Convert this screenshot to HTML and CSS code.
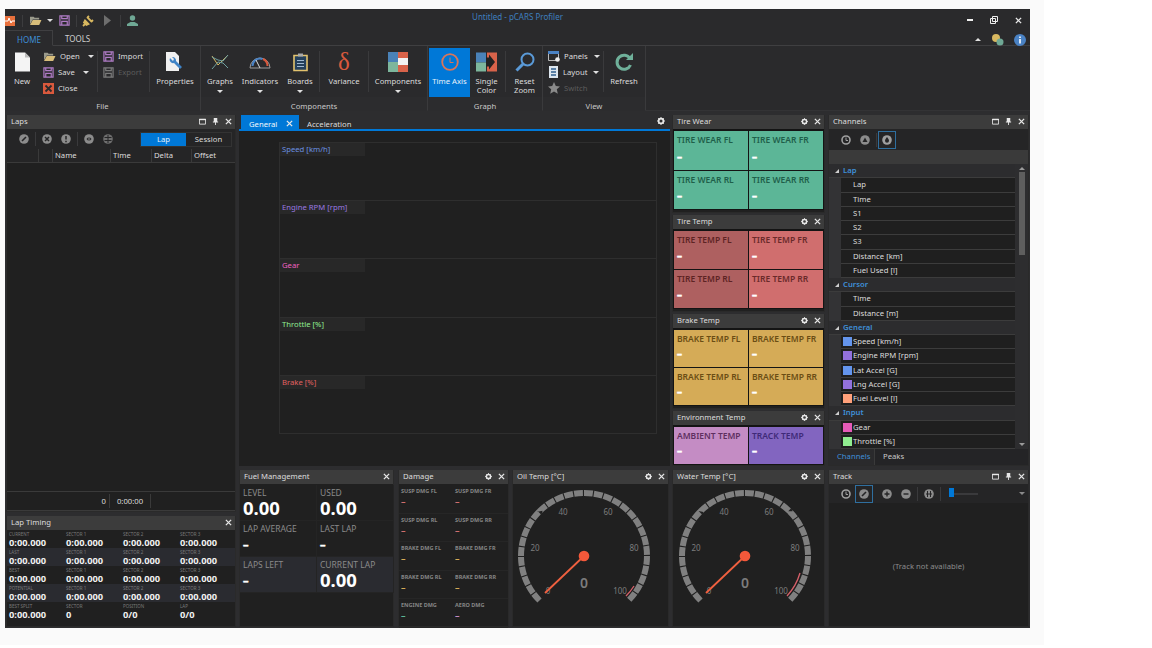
FILE: index.html
```html
<!DOCTYPE html>
<html>

<head>
    <meta charset="utf-8">
    <title>pCARS Profiler</title>
    <link rel="stylesheet" href="styles.css">
</head>

<body>
    <!-- shared small icons -->
    <svg class="sprite">
        <symbol id="i-close" viewBox="0 0 8 8"><path d="M1 1l6 6M7 1L1 7" stroke="#e8e8e8" stroke-width="1.5" fill="none" /></symbol>
        <symbol id="i-max" viewBox="0 0 8 8"><path d="M.5 1.500h7v5.500h-7z" stroke="#e8e8e8" fill="none" /><path d="M0 1h8v1.500H0z" fill="#e8e8e8" /></symbol>
        <symbol id="i-pin" viewBox="0 0 8 8"><path d="M2 0h4v4h1v1H4.500v3h-1V5H1V4h1z" fill="#e8e8e8" /></symbol>
        <symbol id="i-gear" viewBox="0 0 8 8"><circle cx="4" cy="4" r="2.400" stroke="#e8e8e8" stroke-width="1.700" fill="none" /><path d="M4 0v8M0 4h8M1.200 1.200l5.600 5.600M6.800 1.200L1.200 6.800" stroke="#e8e8e8" stroke-width=".9" stroke-dasharray="1.300 5.400" /></symbol>
        <symbol id="i-floppy" viewBox="0 0 12 12"><path d="M1 1h10v10H1zM3 1v3h6V1M3 11V7h6v4" stroke="currentColor" stroke-width="1.300" fill="none" /></symbol>
        <symbol id="i-folder" viewBox="0 0 14 12"><path d="M1 2h4l1 1h5v2H4L1 10z" fill="#9a9a8c" /><path d="M4 5.500h9.500L11 11H1z" fill="#d8bd7a" /></symbol>
        <symbol id="i-edit" viewBox="0 0 10 10"><circle cx="5" cy="5" r="4.800" fill="#8c8c8c" /><path d="M3 7l4-4" stroke="#252526" stroke-width="1.600" /></symbol>
        <symbol id="i-x" viewBox="0 0 10 10"><circle cx="5" cy="5" r="4.800" fill="#8c8c8c" /><path d="M3 3l4 4M7 3L3 7" stroke="#252526" stroke-width="1.500" /></symbol>
        <symbol id="i-warn" viewBox="0 0 10 10"><circle cx="5" cy="5" r="4.800" fill="#8c8c8c" /><path d="M5 2v3.500M5 6.800v1.400" stroke="#252526" stroke-width="1.500" /></symbol>
        <symbol id="i-left" viewBox="0 0 10 10"><circle cx="5" cy="5" r="4.800" fill="#8c8c8c" /><path d="M4.500 3L2.500 5l2 2zM5.500 3l2 2-2 2z" fill="#252526" /></symbol>
        <symbol id="i-both" viewBox="0 0 10 10"><circle cx="5" cy="5" r="4.800" fill="#6e6e6e" /><path d="M5 1v8M1.500 3.500h7M1.500 6.500h7" stroke="#252526" /></symbol>
        <symbol id="i-clock" viewBox="0 0 10 10"><circle cx="5" cy="5" r="4" stroke="#a0a0a0" stroke-width="1.600" fill="none" /><path d="M5 2.500V5.500H7" stroke="#a0a0a0" fill="none" /></symbol>
        <symbol id="i-tri" viewBox="0 0 10 10"><circle cx="5" cy="5" r="4.800" fill="#8c8c8c" /><path d="M5 2.500l2.500 4.500h-5z" fill="#252526" /></symbol>
        <symbol id="i-drop" viewBox="0 0 10 10"><circle cx="5" cy="5" r="4.800" fill="#a0a0a0" /><path d="M5 2c1 1.500 2 2.500 2 3.700a2 2 0 0 1-4 0C3 4.500 4 3.500 5 2z" fill="#252526" /></symbol>
        <symbol id="i-plus" viewBox="0 0 10 10"><circle cx="5" cy="5" r="4.800" fill="#8c8c8c" /><path d="M2.500 5h5M5 2.500v5" stroke="#252526" stroke-width="1.400" /></symbol>
        <symbol id="i-minus" viewBox="0 0 10 10"><circle cx="5" cy="5" r="4.800" fill="#8c8c8c" /><path d="M2.500 5h5" stroke="#252526" stroke-width="1.400" /></symbol>
        <symbol id="i-grid" viewBox="0 0 10 10"><circle cx="5" cy="5" r="4.800" fill="#8c8c8c" /><path d="M3.500 2v6M6.500 2v6M2 5h6" stroke="#252526" /></symbol>
    </svg>

    <div class="page">
        <div class="window">
            <header class="titlebar">
                <div class="quick">
                    <svg class="q-logo" width="10" height="12" viewBox="0 0 10 12"><path d="M0 1h10v10H0z" fill="#e8703c" /><path d="M0 6h3l1-3 2 5 1-2h3" stroke="#fff" fill="none" /></svg>
                    <span class="q-sep"></span>
                    <svg width="13" height="11"><use href="#i-folder" /></svg>
                    <span class="caret q-caret"></span>
                    <svg class="q-save" width="11" height="11"><use href="#i-floppy" /></svg>
                    <span class="q-sep"></span>
                    <svg class="q-plug" width="12" height="12" viewBox="0 0 12 12"><path d="M1 11l2.500-2.500M5 2l5 5M7 1L5.500 2.500M11 5L9.500 6.500M3 5.500l3.500 3.500-2 1-2.500-2.500z" stroke="#d8b860" stroke-width="1.800" fill="#d8b860" /></svg>
                    <svg class="q-play" width="7" height="11" viewBox="0 0 7 11"><path d="M0 0l7 5.500L0 11z" fill="#6e6e6e" /></svg>
                    <span class="q-sep"></span>
                    <svg class="q-user" width="11" height="11" viewBox="0 0 11 11"><circle cx="5.500" cy="3" r="2.700" fill="#6fa895" /><path d="M0 11V9l3.500-2h4L11 9v2z" fill="#6fa895" /></svg>
                </div>
                <div class="title">Untitled - pCARS Profiler</div>
                <div class="winbtns">
                    <span class="win-min"></span>
                    <svg width="8" height="8" viewBox="0 0 8 8"><path d="M2.500.5h5v5h-5zM.5 2.500h5v5h-5z" stroke="#eee" fill="#2a2a2c" /></svg>
                    <svg width="7" height="7"><use href="#i-close" /></svg>
                </div>
            </header>

            <nav class="tabstrip">
                <span class="rtab rtab-on">HOME</span>
                <span class="rtab">TOOLS</span>
                <div class="tabstrip-right">
                    <span class="caret caret-up"></span>
                    <svg width="13" height="13" viewBox="0 0 13 13"><circle cx="5" cy="5" r="4" fill="#d8b860" /><circle cx="9" cy="9" r="3.500" fill="#6fa895" /></svg>
                    <svg width="12" height="12" viewBox="0 0 12 12"><circle cx="6" cy="6" r="6" fill="#4a82c4" /><path d="M5.200 5h1.600v4.500H5.200zM5.200 2.500h1.600V4H5.200z" fill="#fff" /></svg>
                </div>
            </nav>

            <section class="ribbon">
                <div class="rgroup g-file">
                    <div class="rgroup-body">
                        <div class="bigbtn w-new">
                            <svg width="15" height="19" viewBox="0 0 15 19"><path d="M0 0h10l5 5v14H0z" fill="#f4f4f4" /><path d="M10 0v5h5" fill="#bbb" /></svg>
                            <span>New</span>
                        </div>
                        <div class="smallcol w-open">
                            <div class="smallbtn"><svg width="13" height="11"><use href="#i-folder" /></svg><span>Open</span><span class="caret"></span></div>
                            <div class="smallbtn"><svg class="purple" width="11" height="11"><use href="#i-floppy" /></svg><span>Save</span><span class="caret"></span></div>
                            <div class="smallbtn"><svg width="11" height="11" viewBox="0 0 11 11"><path d="M0 0h11v11H0z" fill="#d9593d" /><path d="M2.500 2.500l6 6M8.500 2.500l-6 6" stroke="#2a2a2c" stroke-width="1.800" /></svg><span>Close</span></div>
                        </div>
                        <span class="rsep"></span>
                        <div class="smallcol w-import">
                            <div class="smallbtn"><svg class="purple" width="11" height="11"><use href="#i-floppy" /></svg><span>Import</span></div>
                            <div class="smallbtn off"><svg class="grey" width="11" height="11"><use href="#i-floppy" /></svg><span>Export</span></div>
                        </div>
                        <span class="rsep"></span>
                        <div class="bigbtn w-props">
                            <svg width="18" height="20" viewBox="0 0 18 20"><path d="M0 0h9l4 4v15H0z" fill="#f0f0f0" /><path d="M4 6a3.500 3.500 0 0 0 4 5l6 6 2-2-6-6a3.500 3.500 0 0 0-4-4l2 2-1 2z" fill="#3f83c6" /></svg>
                            <span>Properties</span>
                        </div>
                    </div>
                    <div class="rgroup-label">File</div>
                </div>

                <div class="rgroup g-comp">
                    <div class="rgroup-body">
                        <div class="bigbtn w-graphs">
                            <svg width="18" height="16" viewBox="0 0 18 16"><path d="M1 2l6 9 5-5 5-5" stroke="#d8b860" fill="none" /><path d="M1 15l6-7 5 1 5 5M1 3l6 3 5 1 5-6" stroke="#6fa0a0" fill="none" /></svg>
                            <span>Graphs</span><span class="caret"></span>
                        </div>
                        <div class="bigbtn w-ind">
                            <svg width="24" height="16" viewBox="0 0 24 16"><path d="M2 14a10 10 0 0 1 20 0z" stroke="#9a9a9a" fill="none" /><path d="M4.500 12a7.500 7.500 0 0 1 10-7" stroke="#4a82c4" stroke-width="2" fill="none" /><path d="M15 5a7.500 7.500 0 0 1 4.500 7" stroke="#d9593d" stroke-width="2" fill="none" /><path d="M8 6l4 8" stroke="#ddd" /></svg>
                            <span>Indicators</span><span class="caret"></span>
                        </div>
                        <div class="bigbtn w-boards">
                            <svg width="15" height="19" viewBox="0 0 15 19"><path d="M1 3h13v15H1z" fill="#24405c" stroke="#e2c26e" stroke-width="1.600" /><path d="M5 1h5v3H5z" fill="#aaa" /><path d="M4 8h7M4 11h7M4 14h7" stroke="#9fb8d0" /></svg>
                            <span>Boards</span><span class="caret"></span>
                        </div>
                        <span class="rsep"></span>
                        <div class="bigbtn w-var">
                            <span class="delta">δ</span>
                            <span>Variance</span>
                        </div>
                        <span class="rsep"></span>
                        <div class="bigbtn w-comps">
                            <svg width="20" height="20" viewBox="0 0 20 20"><path d="M0 0h10v10H0z" fill="#4a82b8" /><path d="M0 10h10v10H0z" fill="#7db69c" /><path d="M10 0h10v6H10zM10 13h10v7H10z" fill="#d9634a" /><path d="M10 6h10v7H10z" fill="#f2f2f2" /></svg>
                            <span>Components</span><span class="caret"></span>
                        </div>
                    </div>
                    <div class="rgroup-label">Components</div>
                </div>

                <div class="rgroup g-graph">
                    <div class="rgroup-body">
                        <div class="bigbtn w-time active">
                            <svg width="18" height="18" viewBox="0 0 18 18"><circle cx="9" cy="9" r="7.800" stroke="#d9755a" stroke-width="1.800" fill="none" /><path d="M9 4.500V9.500H12.500" stroke="#d9755a" fill="none" /></svg>
                            <span>Time Axis</span>
                        </div>
                        <div class="bigbtn w-single">
                            <svg width="21" height="19" viewBox="0 0 21 19"><path d="M0 0h10v10H0z" fill="#4a82b8" /><path d="M0 10h10v9H0z" fill="#7db69c" /><path d="M11 0h10v19H11z" fill="#d9634a" /><path d="M10 5h3V2l6 7.500-6 7.500v-3h-3z" fill="#222" /></svg>
                            <span>Single<br>Color</span>
                        </div>
                        <span class="rsep"></span>
                        <div class="bigbtn w-reset">
                            <svg width="20" height="20" viewBox="0 0 20 20"><circle cx="12.500" cy="7.500" r="6" stroke="#5a9ad8" stroke-width="2" fill="none" /><path d="M8 12l-6.500 6.500" stroke="#5a9ad8" stroke-width="3" /></svg>
                            <span>Reset<br>Zoom</span>
                        </div>
                    </div>
                    <div class="rgroup-label">Graph</div>
                </div>

                <div class="rgroup g-view">
                    <div class="rgroup-body">
                        <div class="smallcol w-panels">
                            <div class="smallbtn"><svg width="12" height="11" viewBox="0 0 12 11"><path d="M.5 1.500h10v8H.5z" stroke="#bbb" fill="none" /><path d="M0 0h11v3H0z" fill="#4a82c4" /><circle cx="9.500" cy="8.500" r="2.300" fill="#eee" /></svg><span>Panels</span><span class="caret"></span></div>
                            <div class="smallbtn"><svg width="11" height="12" viewBox="0 0 11 12"><path d="M1 0h9v12H1z" fill="#dde6ee" /><path d="M3 3h5M3 6h5M3 9h5" stroke="#2f5f8f" stroke-width="1.400" /></svg><span>Layout</span><span class="caret"></span></div>
                            <div class="smallbtn off"><svg width="12" height="12" viewBox="0 0 12 12"><path d="M6 0l1.800 4 4.200.4-3.200 2.800 1 4.500L6 9.400l-3.800 2.300 1-4.500L0 4.400 4.200 4z" fill="#8a8a8a" /></svg><span>Switch</span></div>
                        </div>
                        <span class="rsep"></span>
                        <div class="bigbtn w-refresh">
                            <svg width="18" height="18" viewBox="0 0 18 18"><path d="M15 5.500A7 7 0 1 0 15.500 12" stroke="#6fb09a" stroke-width="3" fill="none" /><path d="M11 7h7V0z" fill="#6fb09a" /></svg>
                            <span>Refresh</span>
                        </div>
                    </div>
                    <div class="rgroup-label">View</div>
                </div>
            </section>

            <main class="workspace">
                <div class="leftcol">
                    <section class="pane laps">
                        <div class="pane-head"><span>Laps</span>
                            <div class="pane-btns"><svg><use href="#i-max" /></svg><svg><use href="#i-pin" /></svg><svg><use href="#i-close" /></svg></div>
                        </div>
                        <div class="toolbar laps-tools">
                            <svg class="tool"><use href="#i-edit" /></svg>
                            <span class="tool-sep"></span>
                            <svg class="tool"><use href="#i-x" /></svg>
                            <svg class="tool"><use href="#i-warn" /></svg>
                            <span class="tool-sep"></span>
                            <svg class="tool"><use href="#i-left" /></svg>
                            <svg class="tool"><use href="#i-both" /></svg>
                            <div class="segment"><span class="seg seg-on">Lap</span><span class="seg">Session</span></div>
                        </div>
                        <div class="laps-cols">
                            <span class="c1"></span><span class="c2"></span><span class="c3">Name</span><span class="c4">Time</span><span class="c5">Delta</span><span class="c6">Offset</span>
                        </div>
                        <div class="laps-body"></div>
                        <div class="laps-foot"><span class="foot-a">0</span><span class="foot-b">0:00:00</span></div>
                    </section>

                    <section class="pane timing">
                        <div class="pane-head"><span>Lap Timing</span>
                            <div class="pane-btns"><svg><use href="#i-close" /></svg></div>
                        </div>
                        <div class="timing-grid">
                            <div class="tm"><small>CURRENT</small><b>0:00.000</b></div><div class="tm"><small>SECTOR 1</small><b>0:00.000</b></div><div class="tm"><small>SECTOR 2</small><b>0:00.000</b></div><div class="tm"><small>SECTOR 3</small><b>0:00.000</b></div>
                            <div class="tm alt"><small>LAST</small><b>0:00.000</b></div><div class="tm alt"><small>SECTOR 1</small><b>0:00.000</b></div><div class="tm alt"><small>SECTOR 2</small><b>0:00.000</b></div><div class="tm alt"><small>SECTOR 3</small><b>0:00.000</b></div>
                            <div class="tm"><small>BEST</small><b>0:00.000</b></div><div class="tm"><small>SECTOR 1</small><b>0:00.000</b></div><div class="tm"><small>SECTOR 2</small><b>0:00.000</b></div><div class="tm"><small>SECTOR 3</small><b>0:00.000</b></div>
                            <div class="tm alt"><small>POTENTIAL</small><b>0:00.000</b></div><div class="tm alt"><small>SECTOR 1</small><b>0:00.000</b></div><div class="tm alt"><small>SECTOR 2</small><b>0:00.000</b></div><div class="tm alt"><small>SECTOR 3</small><b>0:00.000</b></div>
                            <div class="tm"><small>BEST SPLIT</small><b>0:00.000</b></div><div class="tm"><small>SECTOR</small><b>0</b></div><div class="tm"><small>POSITION</small><b>0/0</b></div><div class="tm"><small>LAP</small><b>0/0</b></div>
                        </div>
                    </section>
                </div>

                <div class="rightcol">
                    <div class="toprow">
                        <section class="doc">
                            <div class="doc-tabs">
                                <span class="dtab dtab-on">General<svg width="7" height="7"><use href="#i-close" /></svg></span>
                                <span class="dtab">Acceleration</span>
                                <svg class="doc-gear" width="8" height="8"><use href="#i-gear" /></svg>
                            </div>
                            <div class="doc-body">
                                <div class="plot">
                                    <div class="plot-row"><span class="plot-label c-speed">Speed [km/h]</span></div>
                                    <div class="plot-row"><span class="plot-label c-rpm">Engine RPM [rpm]</span></div>
                                    <div class="plot-row"><span class="plot-label c-gear">Gear</span></div>
                                    <div class="plot-row"><span class="plot-label c-throttle">Throttle [%]</span></div>
                                    <div class="plot-row"><span class="plot-label c-brake">Brake [%]</span></div>
                                </div>
                            </div>
                        </section>

                        <div class="tilecol">
                            <section class="pane tp-wear">
                                <div class="pane-head"><span>Tire Wear</span><div class="pane-btns"><svg><use href="#i-gear" /></svg><svg><use href="#i-close" /></svg></div></div>
                                <div class="tiles">
                                    <div class="tile green"><span>TIRE WEAR FL</span><b>–</b></div>
                                    <div class="tile green"><span>TIRE WEAR FR</span><b>–</b></div>
                                    <div class="tile green"><span>TIRE WEAR RL</span><b>–</b></div>
                                    <div class="tile green"><span>TIRE WEAR RR</span><b>–</b></div>
                                </div>
                            </section>
                            <section class="pane tp-temp">
                                <div class="pane-head"><span>Tire Temp</span><div class="pane-btns"><svg><use href="#i-gear" /></svg><svg><use href="#i-close" /></svg></div></div>
                                <div class="tiles">
                                    <div class="tile darkred"><span>TIRE TEMP FL</span><b>–</b></div>
                                    <div class="tile red"><span>TIRE TEMP FR</span><b>–</b></div>
                                    <div class="tile darkred"><span>TIRE TEMP RL</span><b>–</b></div>
                                    <div class="tile red"><span>TIRE TEMP RR</span><b>–</b></div>
                                </div>
                            </section>
                            <section class="pane tp-brake">
                                <div class="pane-head"><span>Brake Temp</span><div class="pane-btns"><svg><use href="#i-gear" /></svg><svg><use href="#i-close" /></svg></div></div>
                                <div class="tiles">
                                    <div class="tile gold"><span>BRAKE TEMP FL</span><b>–</b></div>
                                    <div class="tile gold"><span>BRAKE TEMP FR</span><b>–</b></div>
                                    <div class="tile gold"><span>BRAKE TEMP RL</span><b>–</b></div>
                                    <div class="tile gold"><span>BRAKE TEMP RR</span><b>–</b></div>
                                </div>
                            </section>
                            <section class="pane tp-env">
                                <div class="pane-head"><span>Environment Temp</span><div class="pane-btns"><svg><use href="#i-gear" /></svg><svg><use href="#i-close" /></svg></div></div>
                                <div class="tiles">
                                    <div class="tile pink"><span>AMBIENT TEMP</span><b>–</b></div>
                                    <div class="tile purple-t"><span>TRACK TEMP</span><b>–</b></div>
                                </div>
                            </section>
                        </div>

                        <section class="pane channels">
                            <div class="pane-head"><span>Channels</span>
                                <div class="pane-btns"><svg><use href="#i-max" /></svg><svg><use href="#i-pin" /></svg><svg><use href="#i-close" /></svg></div>
                            </div>
                            <div class="toolbar ch-tools">
                                <svg class="tool"><use href="#i-clock" /></svg>
                                <svg class="tool"><use href="#i-tri" /></svg>
                                <span class="tool-sep"></span>
                                <span class="tool-box"><svg class="tool"><use href="#i-drop" /></svg></span>
                            </div>
                            <div class="ch-band"></div>
                            <div class="ch-main">
                                <div class="tree">
                                    <div class="tgroup">Lap</div>
                                    <div class="titem">Lap</div>
                                    <div class="titem">Time</div>
                                    <div class="titem">S1</div>
                                    <div class="titem">S2</div>
                                    <div class="titem">S3</div>
                                    <div class="titem">Distance [km]</div>
                                    <div class="titem">Fuel Used [l]</div>
                                    <div class="tgroup">Cursor</div>
                                    <div class="titem">Time</div>
                                    <div class="titem">Distance [m]</div>
                                    <div class="tgroup">General</div>
                                    <div class="titem"><i class="sw sw-blue"></i>Speed [km/h]</div>
                                    <div class="titem"><i class="sw sw-violet"></i>Engine RPM [rpm]</div>
                                    <div class="titem"><i class="sw sw-blue"></i>Lat Accel [G]</div>
                                    <div class="titem"><i class="sw sw-violet"></i>Lng Accel [G]</div>
                                    <div class="titem"><i class="sw sw-peach"></i>Fuel Level [l]</div>
                                    <div class="tgroup">Input</div>
                                    <div class="titem"><i class="sw sw-pink"></i>Gear</div>
                                    <div class="titem"><i class="sw sw-lime"></i>Throttle [%]</div>
                                </div>
                                <div class="scroll">
                                    <span class="caret caret-up"></span>
                                    <div class="scroll-thumb"></div>
                                    <span class="caret scroll-down"></span>
                                </div>
                            </div>
                            <div class="ch-tabs"><span class="ctab ctab-on">Channels</span><span class="ctab">Peaks</span></div>
                        </section>
                    </div>

                    <div class="bottomrow">
                        <section class="pane fuel">
                            <div class="pane-head"><span>Fuel Management</span><div class="pane-btns"><svg><use href="#i-close" /></svg></div></div>
                            <div class="fuel-grid">
                                <div class="fc"><span>LEVEL</span><b>0.00</b></div>
                                <div class="fc"><span>USED</span><b>0.00</b></div>
                                <div class="fc"><span>LAP AVERAGE</span><b class="dash">–</b></div>
                                <div class="fc"><span>LAST LAP</span><b class="dash">–</b></div>
                                <div class="fc alt"><span>LAPS LEFT</span><b class="dash">–</b></div>
                                <div class="fc alt"><span>CURRENT LAP</span><b>0.00</b></div>
                            </div>
                        </section>

                        <section class="pane damage">
                            <div class="pane-head"><span>Damage</span><div class="pane-btns"><svg><use href="#i-gear" /></svg><svg><use href="#i-close" /></svg></div></div>
                            <div class="damage-grid">
                                <div class="dc d-red"><span>SUSP DMG FL</span><b>–</b></div>
                                <div class="dc d-red"><span>SUSP DMG FR</span><b>–</b></div>
                                <div class="dc d-red"><span>SUSP DMG RL</span><b>–</b></div>
                                <div class="dc d-red"><span>SUSP DMG RR</span><b>–</b></div>
                                <div class="dc d-gold"><span>BRAKE DMG FL</span><b>–</b></div>
                                <div class="dc d-gold"><span>BRAKE DMG FR</span><b>–</b></div>
                                <div class="dc d-gold"><span>BRAKE DMG RL</span><b>–</b></div>
                                <div class="dc d-gold"><span>BRAKE DMG RR</span><b>–</b></div>
                                <div class="dc d-green"><span>ENGINE DMG</span><b>–</b></div>
                                <div class="dc d-pink"><span>AERO DMG</span><b>–</b></div>
                            </div>
                        </section>

                        <section class="pane gauge-pane">
                            <div class="pane-head"><span>Oil Temp [°C]</span><div class="pane-btns"><svg><use href="#i-gear" /></svg><svg><use href="#i-close" /></svg></div></div>
                            <svg class="gauge" viewBox="0 0 155 142">
                                <path class="g-ring" pathLength="300" d="M26.500 116.500A63 63 0 1 1 115.500 116.500" />
                                <path class="g-hot" d="M113 112A58 58 0 0 0 121 102" />
                                <g class="g-ticks">
                                    <text x="22" y="67">20</text><text x="50" y="31">40</text><text x="95" y="31">60</text><text x="121" y="67">80</text><text x="107" y="110">100</text><text x="35" y="110">0</text>
                                </g>
                                <text class="g-value" x="71" y="104">0</text>
                                <path class="g-needle" d="M71 72L32 109" />
                                <circle class="g-hub" cx="71" cy="72" r="5.300" />
                            </svg>
                        </section>

                        <section class="pane gauge-pane water">
                            <div class="pane-head"><span>Water Temp [°C]</span><div class="pane-btns"><svg><use href="#i-gear" /></svg><svg><use href="#i-close" /></svg></div></div>
                            <svg class="gauge" viewBox="0 0 151 142">
                                <path class="g-ring" pathLength="300" d="M27.500 116.500A63 63 0 1 1 116.500 116.500" />
                                <path class="g-hot" d="M114 112A58 58 0 0 0 127 89" />
                                <g class="g-ticks">
                                    <text x="23" y="67">20</text><text x="51" y="31">40</text><text x="96" y="31">60</text><text x="122" y="67">80</text><text x="108" y="110">100</text><text x="36" y="110">0</text>
                                </g>
                                <text class="g-value" x="72" y="104">0</text>
                                <path class="g-needle" d="M72 72L33 109" />
                                <circle class="g-hub" cx="72" cy="72" r="5.300" />
                            </svg>
                        </section>

                        <section class="pane track">
                            <div class="pane-head"><span>Track</span>
                                <div class="pane-btns"><svg><use href="#i-max" /></svg><svg><use href="#i-pin" /></svg><svg><use href="#i-close" /></svg></div>
                            </div>
                            <div class="toolbar track-tools">
                                <svg class="tool"><use href="#i-clock" /></svg>
                                <span class="tool-box"><svg class="tool"><use href="#i-edit" /></svg></span>
                                <svg class="tool"><use href="#i-plus" /></svg>
                                <svg class="tool"><use href="#i-minus" /></svg>
                                <span class="tool-sep"></span>
                                <svg class="tool"><use href="#i-grid" /></svg>
                                <span class="tool-sep"></span>
                                <div class="slider"><span class="slider-knob"></span></div>
                                <span class="caret track-caret"></span>
                            </div>
                            <div class="track-body">(Track not available)</div>
                        </section>
                    </div>
                </div>
            </main>
        </div>
    </div>
</body>

</html>
```

FILE: styles.css
```css
* {
    box-sizing: border-box;
}

html,
body {
    margin: 0;
    padding: 0;
    background-color: #fff;
}

body {
    font-family: "Noto Sans", Arial, sans-serif;
    font-size: 7.700px;
    color: #dcdcdc;
    overflow: hidden;
}

.sprite {
    display: none;
}

.page {
    width: 1044px;
    height: 645px;
    padding: 9px 0 0 5px;
    background-color: #fafafa;
}

.window {
    width: 1025px;
    height: 619px;
    background-color: #2a2a2c;
    display: flex;
    flex-direction: column;
}

/* title bar */
.titlebar {
    height: 22px;
    flex: none;
    display: flex;
    align-items: center;
    position: relative;
}

.quick {
    display: flex;
    align-items: center;
    margin-top: 1px;
}

.q-sep {
    width: 1px;
    height: 12px;
    background-color: #3c3c3e;
    margin: 0 6px;
}

.q-logo {
    margin-right: 1px;
}

.q-caret {
    margin: 0 6px 0 5px;
}

.q-save {
    color: #b07cc6;
}

.q-plug {
    margin-left: -1px;
}

.q-play {
    margin-left: 10px;
    margin-right: 3px;
}

.title {
    position: absolute;
    left: 0;
    right: 0;
    top: 2px;
    text-align: center;
    color: #3f7fbf;
    font-size: 8px;
}

.winbtns {
    margin-left: auto;
    display: flex;
    align-items: center;
    gap: 17px;
    padding-right: 8px;
}

.win-min {
    width: 6px;
    height: 2px;
    background-color: #f0f0f0;
}

.caret {
    display: inline-block;
    width: 0;
    height: 0;
    border-left: 3px solid transparent;
    border-right: 3px solid transparent;
    border-top: 3px solid #e0e0e0;
}

.caret-up {
    border-top: none;
    border-bottom: 3px solid #e0e0e0;
}

/* ribbon tabs */
.tabstrip {
    height: 15px;
    flex: none;
    display: flex;
    align-items: flex-end;
    border-bottom: 1px solid #3f3f41;
}

.rtab {
    height: 15px;
    line-height: 17px;
    padding: 0 11px 0 12px;
    font-size: 8px;
    color: #cfcfcf;
}

.rtab-on {
    color: #3f8fd8;
    border: 1px solid #3f3f41;
    border-bottom: 1px solid #2a2a2c;
    border-left: none;
    margin-bottom: -1px;
    height: 16px;
}

.tabstrip-right {
    margin-left: auto;
    display: flex;
    align-items: center;
    height: 15px;
    margin-bottom: -2px;
    padding-right: 4px;
    gap: 10px;
}

/* ribbon */
.ribbon {
    height: 65px;
    flex: none;
    display: flex;
    border-bottom: 1px solid #333335;
}

.rgroup {
    display: flex;
    flex-direction: column;
    border-right: 1px solid #3a3a3c;
    height: 64px;
}

.g-file {
    width: 196px;
}

.g-comp {
    width: 227px;
}

.g-graph {
    width: 115px;
}

.g-view {
    width: 103px;
}

.rgroup-body {
    flex: 1;
    display: flex;
    padding-top: 2px;
}

.rgroup-label {
    height: 14px;
    padding-top: 3px;
    line-height: 12px;
    text-align: center;
    color: #c8c8c8;
    background-color: #2c2c2e;
}

.rsep {
    width: 1px;
    height: 41px;
    margin: 3px 2px 0;
    background-color: #3a3a3c;
    flex: none;
}

.bigbtn {
    display: flex;
    flex-direction: column;
    align-items: center;
    height: 49px;
    text-align: center;
    line-height: 9px;
    flex: none;
    white-space: nowrap;
}

.bigbtn svg,
.delta {
    height: 20px;
    margin: 4px 0 5px;
    flex: none;
}

.bigbtn .caret {
    margin-top: 4px;
}

.delta {
    font-family: "Liberation Serif", serif;
    font-size: 25px;
    line-height: 20px;
    color: #d9593d;
}

.active {
    background-color: #0078d7;
    color: #e8f2fa;
}

.w-new { width: 34px; }
.w-open { width: 52px; margin-left: 4px; }
.w-import { width: 44px; margin-left: 3px; }
.w-props { width: 46px; }
.w-graphs { width: 34px; margin-left: 2px; }
.w-ind { width: 46px; }
.w-boards { width: 34px; }
.w-var { width: 44px; }
.w-comps { width: 54px; }
.w-time { width: 41px; margin-left: 1px; }
.w-single { width: 33px; }
.w-reset { width: 33px; }
.w-panels { width: 53px; margin-left: 5px; }
.w-refresh { width: 34px; margin-left: 1px; }

.smallcol {
    display: flex;
    flex-direction: column;
    flex: none;
}

.smallbtn {
    height: 16px;
    display: flex;
    align-items: center;
    gap: 4px;
    white-space: nowrap;
}

.smallbtn .caret {
    margin-left: 2px;
}

.w-open .caret {
    margin-left: 4px;
}

.off {
    color: #5c5c5c;
}

.purple {
    color: #b07cc6;
}

.grey {
    color: #7c7c7c;
}

/* workspace */
.workspace {
    flex: 1;
    min-height: 0;
    display: flex;
    gap: 3px;
    padding: 4px 1px 1px 1px;
    background-color: #2d2d2f;
}

.leftcol {
    width: 230px;
    flex: none;
    display: flex;
    flex-direction: column;
    gap: 4px;
}

.rightcol {
    flex: 1;
    min-width: 0;
    display: flex;
    flex-direction: column;
    gap: 4px;
}

.toprow {
    height: 351px;
    flex: none;
    display: flex;
}

.bottomrow {
    flex: 1;
    min-height: 0;
    display: flex;
}

.pane {
    background-color: #202020;
    display: flex;
    flex-direction: column;
    min-height: 0;
    border: 1px solid #2a2a2a;
    border-top: none;
}

.pane-head {
    height: 14px;
    flex: none;
    display: flex;
    align-items: center;
    justify-content: space-between;
    padding: 0 3px 2px 4px;
    background-color: #3c3c3c;
    color: #dcdcdc;
}

.pane-btns {
    display: flex;
    align-items: center;
    gap: 6px;
}

.pane-btns svg {
    width: 7px;
    height: 7px;
}

.toolbar {
    display: flex;
    align-items: center;
    flex: none;
    gap: 9px;
    background-color: #252526;
}

.tool {
    width: 10px;
    height: 10px;
    flex: none;
}

.tool-sep {
    width: 1px;
    height: 14px;
    background-color: #3a3a3c;
    margin: 0 -3px;
    flex: none;
}

.tool-box {
    width: 18px;
    height: 18px;
    border: 1px solid #2f6f9f;
    display: flex;
    align-items: center;
    justify-content: center;
    flex: none;
}

/* laps */
.laps {
    height: 397px;
    flex: none;
}

.laps-tools {
    height: 20px;
    padding-left: 12px;
}

.segment {
    margin-left: auto;
    margin-right: 3px;
    display: flex;
    width: 92px;
    height: 15px;
    border: 1px solid #333;
}

.seg {
    flex: 1;
    text-align: center;
    line-height: 13px;
}

.seg-on {
    background-color: #0078d7;
    color: #e8f2fa;
}

.laps-cols {
    height: 14px;
    flex: none;
    display: flex;
    line-height: 13px;
    border-bottom: 1px solid #3a3a3a;
    background-color: #252526;
}

.laps-cols span {
    padding-left: 2px;
    border-right: 1px solid #3a3a3a;
    flex: none;
}

.c1 { width: 32px; }
.c2 { width: 14px; }
.c3 { width: 58px; }
.c4 { width: 41px; }
.c5 { width: 40px; }
.c6 { width: 43px; border-right: none !important; }

.laps-body {
    flex: 1;
}

.laps-foot {
    height: 20px;
    flex: none;
    display: flex;
    align-items: center;
    border-top: 1px solid #3a3a3a;
    border-bottom: 1px solid #3a3a3a;
}

.foot-a {
    width: 103px;
    text-align: right;
    padding-right: 3px;
    border-right: 1px solid #3a3a3a;
    line-height: 14px;
}

.foot-b {
    width: 41px;
    text-align: center;
    border-right: 1px solid #3a3a3a;
    line-height: 14px;
}

/* lap timing */
.timing {
    flex: 1;
}

.timing-grid {
    display: grid;
    grid-template-columns: repeat(4, 57px);
    grid-auto-rows: 18px;
}

.tm {
    padding: 1px 0 0 2px;
    display: flex;
    flex-direction: column;
}

.tm small {
    font-size: 4.500px;
    line-height: 6px;
    color: #7a7a7a;
}

.tm b {
    font-size: 9.300px;
    line-height: 11px;
    color: #f0f0f0;
}

.alt {
    background-color: #2a2b30;
}

/* document area */
.doc {
    width: 431px;
    flex: none;
    display: flex;
    flex-direction: column;
    background-color: #202020;
    margin-right: 2px;
}

.doc-tabs {
    height: 16px;
    flex: none;
    display: flex;
    align-items: flex-start;
    background-color: #2d2d2f;
    border-bottom: 2px solid #0078d7;
    padding-left: 2px;
    position: relative;
}

.dtab {
    height: 15px;
    padding: 2px 8px 0;
    line-height: 12px;
    display: flex;
    align-items: center;
    gap: 9px;
}

.dtab svg {
    flex: none;
}

.dtab-on {
    background-color: #0078d7;
    color: #f2f8fd;
    width: 58px;
}

.doc-gear {
    position: absolute;
    right: 5px;
    top: 2px;
}

.doc-body {
    flex: 1;
    padding: 11px 13px 32px 40px;
}

.plot {
    height: 100%;
    display: flex;
    flex-direction: column;
    border: 1px solid #2e2e2e;
}

.plot-row {
    flex: 1;
    border-bottom: 1px solid #2e2e2e;
}

.plot-row:last-child {
    border-bottom: none;
}

.plot-label {
    display: block;
    width: 85px;
    height: 13px;
    line-height: 12px;
    padding-left: 2px;
    background-color: #282828;
}

.c-speed { color: #6a90e0; }
.c-rpm { color: #9a78e0; }
.c-gear { color: #f060c0; }
.c-throttle { color: #90ee90; }
.c-brake { color: #e06060; }

/* tiles */
.tilecol {
    width: 153px;
    flex: none;
    display: flex;
    flex-direction: column;
    gap: 2px;
    margin-right: 3px;
}

.tp-wear { height: 98px; }
.tp-temp { height: 97px; }
.tp-brake { height: 95px; }
.tp-env { height: 55px; }

.tiles {
    flex: 1;
    min-height: 0;
    display: grid;
    grid-template-columns: 1fr 1fr;
    grid-auto-rows: 1fr;
    gap: 1px;
    padding: 2px 1px 1px 1px;
    margin-bottom: 2px;
    background-color: #141414;
}

.tp-env .tiles {
    margin-bottom: 0;
}

.tile {
    padding: 3px 0 0 3px;
    display: flex;
    flex-direction: column;
    justify-content: space-between;
    font-size: 8.500px;
    font-weight: 600;
    line-height: 11px;
    white-space: nowrap;
    overflow: hidden;
}

.tile b {
    color: #fff;
    line-height: 11px;
    margin-bottom: 8px;
    font-size: 10px;
    -webkit-text-stroke: .5px #fff;
}

.green { background-color: #5cb697; color: #1f5f4a; }
.red { background-color: #d06e6e; color: #6a2a2a; }
.darkred { background-color: #ae6060; color: #5e2424; }
.gold { background-color: #d5ab57; color: #6a4d14; }
.pink { background-color: #c48cc4; color: #5f2f5f; }
.purple-t { background-color: #8265c0; color: #3f2a78; }

/* channels */
.channels {
    flex: 1;
    min-width: 0;
}

.ch-tools {
    height: 21px;
    padding-left: 12px;
}

.ch-tools .tool-sep {
    margin: 0 -8px 0 -3px;
}

.ch-band {
    height: 14px;
    flex: none;
    background-color: #3a3a3a;
}

.ch-main {
    flex: 1;
    min-height: 0;
    display: flex;
    background-color: #333335;
}

.tree {
    width: 186px;
    flex: none;
    overflow: hidden;
}

.tgroup,
.titem {
    height: 14.250px;
    line-height: 13px;
    border-bottom: 1px solid #3c3c3c;
    white-space: nowrap;
}

.tgroup {
    padding-left: 14px;
    color: #3f8fd8;
    font-weight: 600;
    position: relative;
    background-color: #2c2c2e;
}

.tgroup::before {
    content: "";
    position: absolute;
    left: 6px;
    top: 5px;
    border-left: 4px solid transparent;
    border-bottom: 4px solid #cfcfcf;
}

.titem {
    margin-left: 12px;
    padding-left: 12px;
    background-color: #1f1f1f;
    position: relative;
}

.sw {
    position: absolute;
    left: 2px;
    top: 2px;
    width: 9px;
    height: 9px;
}

.sw-blue { background-color: #6495ed; }
.sw-violet { background-color: #9370db; }
.sw-peach { background-color: #ffa07a; }
.sw-pink { background-color: #e55bb8; }
.sw-lime { background-color: #90ee90; }

.scroll {
    flex: 1;
    display: flex;
    flex-direction: column;
    align-items: center;
    padding-top: 3px;
    background-color: #2d2d2f;
}

.scroll-thumb {
    width: 6px;
    height: 83px;
    margin-top: 2px;
    background-color: #5e5e5e;
}

.scroll-down {
    margin-top: auto;
    margin-bottom: 3px;
}

.scroll .caret {
    border-top-color: #9a9a9a;
    border-bottom-color: #9a9a9a;
}

.ch-tabs {
    height: 16px;
    flex: none;
    display: flex;
    background-color: #242426;
}

.ctab {
    width: 46px;
    line-height: 14px;
    padding-left: 8px;
    color: #c8c8c8;
}

.ctab-on {
    color: #3f8fd8;
    border-right: 1px solid #3a3a3a;
    background-color: #2a2a2c;
}

/* bottom panes */
.fuel {
    width: 155px;
    flex: none;
    margin-right: 4px;
}

.fuel-grid {
    display: grid;
    grid-template-columns: 77px 77px;
    grid-auto-rows: 36px;
    padding-top: 1px;
}

.fc {
    padding: 2px 0 0 3px;
    display: flex;
    flex-direction: column;
    border-right: 1px solid #242424;
    border-bottom: 1px solid #242424;
}

.fc span {
    font-size: 8.500px;
    line-height: 11px;
    color: #8a8a8a;
}

.fc b {
    font-size: 18.500px;
    line-height: 19px;
    color: #fff;
}

.fc b.dash {
    font-size: 11px;
    line-height: 21px;
    -webkit-text-stroke: .5px #fff;
}

.damage {
    width: 111px;
    flex: none;
    margin-right: 3px;
}

.damage-grid {
    display: grid;
    grid-template-columns: 54px 55px;
    grid-auto-rows: 28.500px;
    padding-top: 1px;
}

.dc {
    padding: 2px 0 0 2px;
    display: flex;
    flex-direction: column;
    border-bottom: 1px solid #262626;
    white-space: nowrap;
}

.dc span {
    font-size: 5.500px;
    font-weight: 700;
    line-height: 9px;
    color: #858585;
}

.dc b {
    font-size: 9px;
    line-height: 12px;
}

.d-red b { color: #d06e6e; }
.d-gold b { color: #d5ab57; }
.d-green b { color: #5cb697; }
.d-pink b { color: #c48cc4; }

.gauge-pane {
    width: 157px;
    flex: none;
    margin-right: 3px;
}

.water {
    width: 153px;
}

.gauge {
    display: block;
    flex: 1;
    min-height: 0;
    width: 100%;
}

.g-ring {
    fill: none;
    stroke: #808080;
    stroke-width: 6;
    stroke-dasharray: 8.900 1.100;
}

.g-hot {
    fill: none;
    stroke: #d8606a;
    stroke-width: 1.300;
}

.g-ticks text {
    font-size: 8px;
    fill: #7c7c7c;
    text-anchor: middle;
}

.g-value {
    font-size: 14px;
    font-weight: 600;
    fill: #7c7c7c;
    text-anchor: middle;
}

.g-needle {
    stroke: #f0603f;
    stroke-width: 1.800;
    fill: none;
}

.g-hub {
    fill: #f4583a;
}

.track {
    flex: 1;
    min-width: 0;
}

.track-tools {
    height: 19px;
    padding-left: 12px;
}

.track-tools .tool-box {
    margin-left: -5px;
}

.slider {
    width: 29px;
    height: 12px;
    position: relative;
    margin-left: 2px;
}

.slider::before {
    content: "";
    position: absolute;
    left: 0;
    right: 0;
    top: 5px;
    height: 2px;
    background-color: #3a3a3c;
}

.slider-knob {
    position: absolute;
    left: 0;
    top: 0;
    width: 5px;
    height: 9px;
    background-color: #0078d7;
}

.track-caret {
    margin-left: auto;
    margin-right: 3px;
    border-top-color: #8a8a8a;
}

.track-body {
    flex: 1;
    display: flex;
    align-items: center;
    justify-content: center;
    color: #8c8c8c;
    padding-top: 2px;
}
```
